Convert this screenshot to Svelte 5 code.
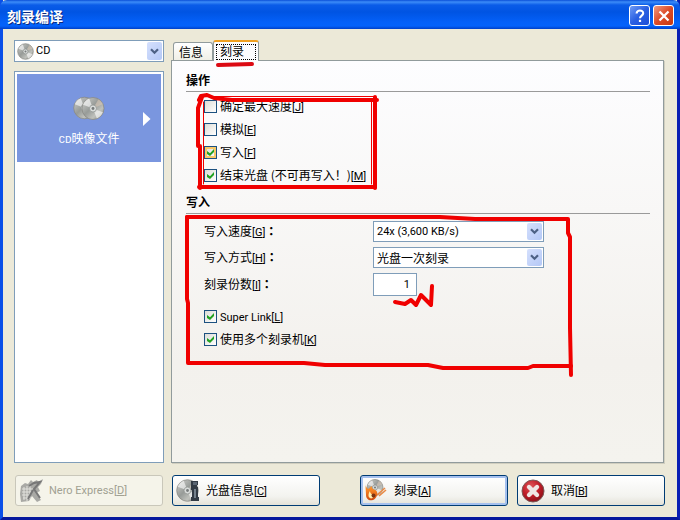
<script>
  let media = $state('CD');
  let tab = $state('burn');
  let speed = $state('24x (3,600 KB/s)');
  let method = $state('光盘一次刻录');
  let copies = $state('1');

  let actions = $state([
    { id: 'maxspeed', text: '确定最大速度', key: 'J', on: false },
    { id: 'simulate', text: '模拟', key: 'E', on: false },
    { id: 'write', text: '写入', key: 'F', on: true, hot: true },
    { id: 'finalize', text: '结束光盘 (不可再写入！)', key: 'M', on: true }
  ]);
  let extras = $state([
    { id: 'superlink', text: 'Super Link', key: 'L', on: true, latin: true },
    { id: 'multi', text: '使用多个刻录机', key: 'K', on: true }
  ]);
</script>

{#snippet hotkey(k)}<span class="latin">[<u>{k}</u>]</span>{/snippet}

{#snippet disc(cx, cy, r)}
  <circle {cx} {cy} {r} fill="url(#silver)" stroke="#85857f" stroke-width="0.7" />
  <path d="M{cx} {cy}L{cx - r * 0.9} {cy - r * 0.35}A{r} {r} 0 0 1 {cx - r * 0.35} {cy - r * 0.9}Z" fill="#fff" opacity=".6" />
  <path d="M{cx} {cy}L{cx + r * 0.9} {cy + r * 0.35}A{r} {r} 0 0 1 {cx + r * 0.35} {cy + r * 0.9}Z" fill="#fff" opacity=".6" />
  <path d="M{cx} {cy}L{cx + r * 0.5} {cy - r * 0.84}A{r} {r} 0 0 1 {cx + r * 0.9} {cy - r * 0.4}Z" fill="#d8c8b8" opacity=".6" />
  <circle {cx} {cy} r={r * 0.32} fill="#d9dcda" stroke="#8d908e" stroke-width="0.7" />
  <circle {cx} {cy} r={r * 0.13} fill="#777b7b" />
{/snippet}

{#snippet chevron()}
  <span class="drop" aria-hidden="true">
    <svg width="9" height="7" viewBox="0 0 9 7"><path d="M1 1.2l3.5 3.5L8 1.2" fill="none" stroke="#4d6185" stroke-width="2.2" /></svg>
  </span>
{/snippet}

{#snippet check(item)}
  <label class="check">
    <input type="checkbox" class:hot={item.hot} bind:checked={item.on} />
    <span><span class:latin={item.latin}>{item.text}</span>{@render hotkey(item.key)}</span>
  </label>
{/snippet}

<svg class="defs" width="0" height="0" aria-hidden="true">
  <defs>
    <linearGradient id="silver" x1="0" y1="0" x2="1" y2="1">
      <stop offset="0" stop-color="#d4d4d0" />
      <stop offset=".45" stop-color="#979b98" />
      <stop offset=".7" stop-color="#bfc1bc" />
      <stop offset="1" stop-color="#868680" />
    </linearGradient>
    <radialGradient id="crimson" cx=".4" cy=".3" r=".8">
      <stop offset="0" stop-color="#e0575a" />
      <stop offset=".5" stop-color="#bf1d28" />
      <stop offset="1" stop-color="#7e0c14" />
    </radialGradient>
    <linearGradient id="flame" x1="0" y1="0" x2="0" y2="1">
      <stop offset="0" stop-color="#fbb04a" />
      <stop offset=".5" stop-color="#f58222" />
      <stop offset="1" stop-color="#cf4a10" />
    </linearGradient>
  </defs>
</svg>

<div class="window">
  <header>
    <h1>刻录编译</h1>
    <button class="sys help" aria-label="帮助">
      <svg width="18" height="18" viewBox="0 0 18 18"><path d="M5.6 6.6C5.6 2.4 12.4 2.6 12.2 6.4C12.1 8.6 9 8.6 9 11.2" fill="none" stroke="#fff" stroke-width="2.1" /><rect x="7.9" y="12.8" width="2.2" height="2.2" fill="#fff" /></svg>
    </button>
    <button class="sys close" aria-label="关闭">
      <svg width="18" height="18" viewBox="0 0 18 18"><path d="M4.5 4.5l9 9M13.5 4.5l-9 9" stroke="#fff" stroke-width="2.3" /></svg>
    </button>
  </header>

  <main>
    <div class="upper">
      <aside>
        <div class="combo media">
          <svg class="cd" width="17" height="17" viewBox="0 0 17 17">{@render disc(8.5, 8.5, 7.8)}</svg>
          <select class="latin" aria-label="光盘类型" bind:value={media}>
            <option>CD</option>
            <option>DVD</option>
          </select>
          {@render chevron()}
        </div>
        <div class="list">
          <button class="entry">
            <svg width="32" height="25" viewBox="0 0 32 25">
              {@render disc(11.5, 12, 10.8)}
              {@render disc(20, 12.5, 11)}
            </svg>
            <span><span class="mono">CD</span>映像文件</span>
            <svg class="arrow" width="8" height="14" viewBox="0 0 8 14"><path d="M0 0l7.5 7L0 14z" fill="#fff" /></svg>
          </button>
        </div>
      </aside>

      <section class="pages">
        <div class="tabs" role="tablist">
          <button role="tab" aria-selected={tab === 'info'} class:active={tab === 'info'} onclick={() => (tab = 'info')}><span>信息</span></button>
          <button role="tab" aria-selected={tab === 'burn'} class:active={tab === 'burn'} onclick={() => (tab = 'burn')}><span>刻录</span></button>
        </div>
        <div class="panel" role="tabpanel">
          <h2>操作</h2>
          <div class="checks">
            {#each actions as item (item.id)}{@render check(item)}{/each}
          </div>

          <h2>写入</h2>
          <div class="fields">
            <label for="speed">写入速度{@render hotkey('G')}<span class="colon">：</span></label>
            <div class="combo">
              <select id="speed" class="latin" bind:value={speed}>
                <option>24x (3,600 KB/s)</option>
                <option>16x (2,400 KB/s)</option>
              </select>
              {@render chevron()}
            </div>
            <label for="method">写入方式{@render hotkey('H')}<span class="colon">：</span></label>
            <div class="combo">
              <select id="method" bind:value={method}>
                <option>光盘一次刻录</option>
                <option>轨道一次刻录</option>
              </select>
              {@render chevron()}
            </div>
            <label for="copies">刻录份数{@render hotkey('I')}<span class="colon">：</span></label>
            <input id="copies" class="latin" type="text" bind:value={copies} />
          </div>
          <div class="checks">
            {#each extras as item (item.id)}{@render check(item)}{/each}
          </div>
        </div>
      </section>
    </div>

    <footer>
      <button class="cmd" disabled>
        <svg width="26" height="26" viewBox="0 0 26 26">
          <path d="M2 8l4-3 3 1 3-4 2 2 4-2 1 2 5-3-2 5-3 3 2 4-4 2 5 7-4 2-5-6-3 5-8 1-1-8z" fill="#a9a9a5" />
          <path d="M3 11h11M3 14h10M3 17h9M4 20h7M5 9v13M8 8v15M11 8v13" stroke="#e2e2dd" stroke-width="1" />
          <path d="M10 8l5-3 6-1-6 7 6 9M14 12l-5 9" fill="none" stroke="#777" stroke-width="2" />
        </svg>
        <span class="latin">Nero Express[<u>D</u>]</span>
      </button>
      <button class="cmd">
        <svg width="26" height="26" viewBox="0 0 26 26">
          {@render disc(11.5, 12.5, 10.8)}
          <path d="M15 3h7v4h-1v2h1v10h1v4h-8v-4h1v-7h-1z" fill="#333b44" />
          <rect x="17" y="4" width="4" height="3" fill="#5b6672" />
          <path d="M18 11h2v9h-2z" fill="#75818c" />
        </svg>
        <span>光盘信息{@render hotkey('C')}</span>
      </button>
      <button class="cmd default">
        <svg width="26" height="26" viewBox="0 0 26 26">
          {@render disc(11, 9.5, 8)}
          <path d="M13 17l8-7M15 18l7-6" stroke="#e98a45" stroke-width="1.6" />
          <path d="M2 3c-1 5 0 6 2 8c2-1 2-2 4-3c-1 4 4 3 5 6c1 3-1 7-4 8c-4 1-7-1-7-5c0-5-1-8 0-14z" fill="url(#flame)" />
          <path d="M6 13c0 3 3 3 3 6c0 1-2 2-3 1c-2-1-2-4 0-7z" fill="#fff0b0" />
          <circle cx="9.5" cy="17.5" r="2" fill="#7b3512" />
        </svg>
        <span>刻录{@render hotkey('A')}</span>
      </button>
      <button class="cmd">
        <svg width="26" height="26" viewBox="0 0 26 26">
          <circle cx="12" cy="13" r="11" fill="url(#crimson)" stroke="#7a5a58" stroke-width="1" />
          <path d="M8 9l8 8M16 9l-8 8" stroke="#efe6e4" stroke-width="4.4" stroke-linecap="round" />
        </svg>
        <span>取消{@render hotkey('B')}</span>
      </button>
    </footer>
  </main>

  <svg class="marks" width="680" height="520" viewBox="0 0 680 520" aria-hidden="true">
    <g fill="none" stroke="#f00000" stroke-linecap="round" stroke-linejoin="round">
      <path d="M218 65L252 64" stroke-width="4" stroke="#dc0a14" />
      <path d="M199 100L201 96L207 95L214 98L232 100H377" stroke-width="4" />
      <path d="M207 96.5H375.5" stroke-width="1" />
      <path d="M375 97V188" stroke-width="4" />
      <path d="M371.500 102V184" stroke-width="1" />
      <path d="M202 97L198 108V146H200V188" stroke-width="4" />
      <path d="M203.500 102V184" stroke-width="1" />
      <path d="M199 187H375" stroke-width="4" />
      <path d="M187 217H440L475 219H568L568 233L570 237V328L571 375" stroke-width="4" />
      <path d="M187 217V299L188 303V363H304L325 365H428L443 368H528L533 366H571" stroke-width="4" />
      <path d="M395 302L405 304L411 300L416 305L421 295L431 305L432 286" stroke-width="4" />
    </g>
  </svg>
</div>

<style>
  :global(body) {
    margin: 0;
  }
  .window,
  .window button,
  .window input,
  .window select {
    box-sizing: border-box;
    font-family: "Noto Sans CJK SC", sans-serif;
    font-size: 12px;
    line-height: 16px;
    color: #000;
  }
  .window .latin {
    font-family: Roboto, "Noto Sans CJK SC", sans-serif;
    font-size: 11px;
  }
  .mono {
    font-family: "Liberation Mono", monospace;
    font-size: 11px;
  }
  .colon {
    font-family: "Noto Sans CJK TC", sans-serif;
    font-weight: 700;
  }
  .defs {
    position: absolute;
  }
  .window {
    position: relative;
    display: flex;
    flex-direction: column;
    min-height: 100vh;
    border: solid #0831d9;
    border-width: 0 3px 3px;
    border-color: #0a3fe0 #0a1fb4 #06189c #0a4fe8;
    background: #ece9d8;
  }
  header {
    display: flex;
    align-items: center;
    gap: 3px;
    height: 29px;
    margin: 0 -3px;
    padding: 2px 6px 0 7px;
    box-sizing: border-box;
    border-radius: 7px 7px 0 0;
    background: linear-gradient(#0a4fd8 0, #3c8cf8 2px, #0a5ce8 5px, #0054e3 12px, #0460f8 22px, #0462fb 26px, #0040c8 29px);
  }
  h1 {
    flex: 1;
    margin: 0;
    font-size: 14px;
    line-height: 20px;
    font-weight: 700;
    color: #fff;
    text-shadow: 1px 1px 0 #0a2a80;
  }
  .sys {
    display: grid;
    place-items: center;
    width: 21px;
    height: 21px;
    padding: 0;
    border: 1px solid #fff;
    border-radius: 3px;
  }
  .help {
    background: linear-gradient(135deg, #6f9bf5, #2a5fe2 50%, #1c4fd8);
  }
  .close {
    background: linear-gradient(135deg, #f09a80, #dc4b28 50%, #c8380f);
  }
  main {
    flex: 1;
    display: flex;
    flex-direction: column;
    gap: 12px;
    padding: 11px 12px 11px 11px;
  }
  .upper {
    flex: 1;
    display: flex;
    gap: 7px;
  }
  aside {
    display: flex;
    flex-direction: column;
    gap: 9px;
    width: 150px;
  }
  .combo {
    position: relative;
    height: 21px;
  }
  .combo select {
    display: block;
    width: 100%;
    height: 100%;
    padding: 0 20px 0 3px;
    border: 1px solid #7f9db9;
    border-radius: 0;
    appearance: none;
    background: #fff;
  }
  .drop {
    position: absolute;
    top: 2px;
    right: 2px;
    bottom: 2px;
    display: grid;
    place-items: center;
    width: 15px;
    border-radius: 2px;
    background: linear-gradient(135deg, #d5e0fd, #b4c8f6);
    pointer-events: none;
  }
  .media {
    height: 22px;
  }
  .media select {
    padding-left: 21px;
  }
  .cd {
    position: absolute;
    left: 3px;
    top: 3px;
    pointer-events: none;
  }
  .list {
    flex: 1;
    padding: 2px;
    border: 1px solid #7f9db9;
    background: #fff;
  }
  .window .entry {
    position: relative;
    display: flex;
    flex-direction: column;
    align-items: center;
    gap: 9px;
    width: 100%;
    height: 88px;
    padding: 22px 0 0;
    border: 0;
    background: #7a96df;
    color: #fff;
  }
  .arrow {
    position: absolute;
    right: 10px;
    top: 38px;
  }
  .pages {
    flex: 1;
    display: flex;
    flex-direction: column;
    margin-right: 1px;
  }
  .tabs {
    display: flex;
    align-items: flex-end;
    height: 20px;
    padding-left: 2px;
  }
  .tabs button {
    height: 18px;
    padding: 0 9px 0 5px;
    border: 1px solid #919b9c;
    border-bottom: 0;
    border-radius: 3px 3px 0 0;
    background: linear-gradient(#fff, #f0efe6);
  }
  .tabs .active {
    position: relative;
    height: 21px;
    margin-bottom: -1px;
    padding: 0 2px;
    border-top: 2px solid #f0a020;
    background: #fcfcfe;
  }
  .tabs span {
    display: block;
  }
  .tabs .active span {
    height: 16px;
    padding: 0 11px 0 3px;
    border: 1px dotted #000;
    box-sizing: border-box;
    line-height: 12px;
  }
  .panel {
    flex: 1;
    padding: 9px 13px 12px 14px;
    border: 1px solid #919b9c;
    box-shadow: 1px 1px 0 #d0cebf;
    background: linear-gradient(#fdfdff, #f3f1ed 75%, #f4f3ee);
  }
  h2 {
    height: 21px;
    margin: 0;
    border-bottom: 1px solid #9a9a9a;
    font-size: 12px;
    line-height: 20px;
    font-weight: 700;
  }
  .checks {
    padding: 3px 0 5px 18px;
  }
  .check {
    display: flex;
    align-items: center;
    gap: 3px;
    width: max-content;
    height: 23px;
  }
  .check input {
    display: grid;
    place-items: center;
    width: 13px;
    height: 13px;
    margin: 0;
    border: 1px solid #1c5180;
    appearance: none;
    background: linear-gradient(135deg, #dcdcd7, #fff);
  }
  .check input.hot {
    box-shadow: inset 0 0 0 2px #f8c868;
  }
  .check input:checked::before {
    content: "";
    width: 7px;
    height: 7px;
    background: #21a121;
    clip-path: polygon(0 29%, 43% 60%, 100% 0, 100% 42%, 43% 100%, 0 70%);
  }
  .fields {
    display: grid;
    grid-template-columns: 169px 171px;
    row-gap: 5px;
    align-items: center;
    padding: 7px 0 6px 18px;
  }
  .fields input {
    width: 44px;
    height: 23px;
    padding: 0 6px;
    border: 1px solid #7f9db9;
    background: #fff;
    text-align: right;
  }
  footer {
    display: flex;
    gap: 9px;
    padding-left: 1px;
  }
  .cmd {
    display: flex;
    align-items: center;
    gap: 4px;
    width: 148px;
    height: 31px;
    padding: 0 3px;
    border: 1px solid #003c74;
    border-radius: 3px;
    background: linear-gradient(#fff, #f3f3ef 70%, #e4e2d8);
  }
  .default {
    margin-left: auto;
    box-shadow: inset 0 0 0 2px #a5c0ee;
  }
  .window .cmd:disabled,
  .window .cmd:disabled .latin {
    border-color: #c9c7ba;
    background: #f5f4ea;
    color: #a1a192;
  }
  .marks {
    position: absolute;
    top: 0;
    left: -3px;
    pointer-events: none;
  }
</style>
